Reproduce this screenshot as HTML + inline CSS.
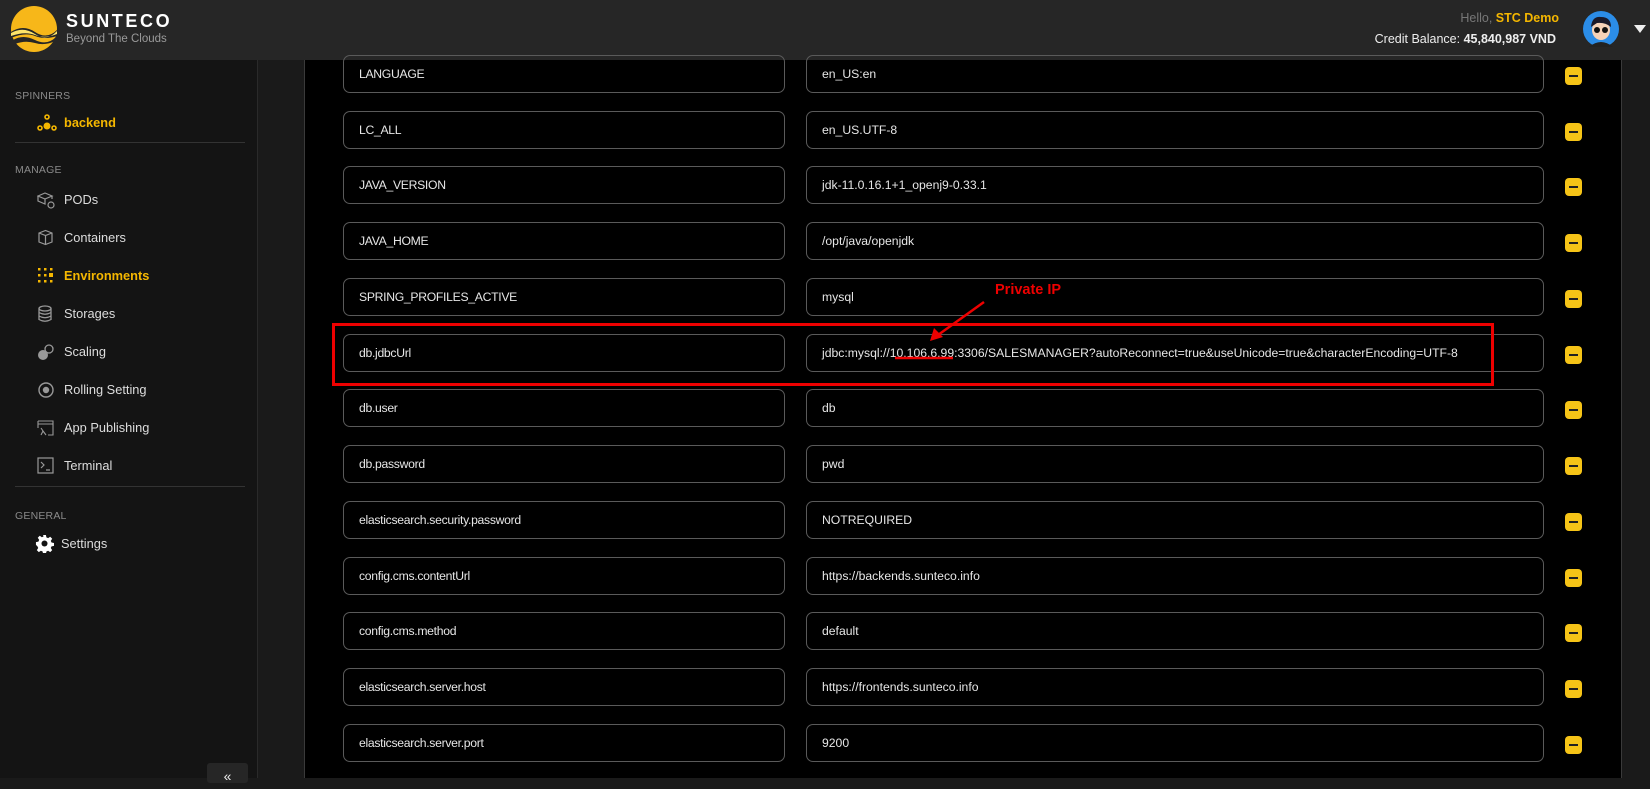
<!DOCTYPE html>
<html><head><meta charset="utf-8"><style>
*{box-sizing:border-box;margin:0;padding:0}
body{width:1650px;height:778px;overflow:hidden;background:#1a1a1a;font-family:"Liberation Sans",sans-serif;position:relative}
.hdr{position:absolute;left:0;top:0;width:1650px;height:60px;background:#262626}
.side{position:absolute;left:0;top:60px;width:258px;height:718px;background:#141414;border-right:1px solid #2a2a2a}
.main{position:absolute;left:304px;top:60px;width:1318px;height:718px;background:#000;border-left:1px solid #3a3a3a;border-right:1px solid #3a3a3a}
.lbl{position:absolute;left:15px;font-size:10.5px;color:#8a8a8a;letter-spacing:.2px}
.it{position:absolute;left:64px;font-size:12.8px;color:#ddd}
.ic{position:absolute;left:37px}
.hr{position:absolute;left:15px;width:230px;height:1px;background:#333}
.box{position:absolute;height:38px;border:1px solid #5a5a5a;border-radius:7px;color:#e6e6e6;font-size:12.2px;line-height:36px;padding-left:15px;white-space:nowrap;overflow:hidden}
.k{left:343px;width:442px;letter-spacing:-0.3px}
.v{left:806px;width:738px}
.m{position:absolute;left:1565px;width:17px;height:18px;background:#f6c417;border-radius:4px}
.m:after{content:"";position:absolute;left:4px;top:8px;width:9px;height:2px;background:#222}
</style></head><body>
<div class="hdr">
 <svg style="position:absolute;left:11px;top:6px" width="46" height="46" viewBox="0 0 46 46">
  <circle cx="23" cy="23" r="23" fill="#f7b719"/>
  <path d="M0 26 Q12 18 24 26 T46 24 L46 30 Q34 34 24 30 T0 32Z" fill="#262626"/>
  <path d="M2 34 Q12 28 24 34 T45 31 L44 35 Q34 40 24 37 T4 38Z" fill="#262626"/>
  <path d="M0 27 Q12 20 24 28 T46 25 L46 28 Q34 33 24 29 T0 30Z" fill="#fde46a"/>
 </svg>
 <div style="position:absolute;left:66px;top:11px;font-size:18px;font-weight:bold;color:#fff;letter-spacing:2.6px">SUNTECO</div>
 <div style="position:absolute;left:66px;top:33px;font-size:11.5px;color:#9a9a9a">Beyond The Clouds</div>
 <div style="position:absolute;right:91px;top:11px;font-size:12.5px;color:#777">Hello, <b style="color:#f5b700">STC Demo</b></div>
 <div style="position:absolute;right:94px;top:32px;font-size:12.5px;color:#eee">Credit Balance: <b>45,840,987 VND</b></div>
 <svg style="position:absolute;left:1583px;top:11px" width="36" height="36" viewBox="0 0 36 36">
  <circle cx="18" cy="18" r="18" fill="#2b8de8"/>
  <path d="M6 36 Q18 26 30 36Z" fill="#222"/>
  <ellipse cx="18" cy="19" rx="9" ry="10" fill="#f5d2b8"/>
  <path d="M8 16 Q9 5 18 6 Q28 6 28 16 Q22 11 14 12Z" fill="#1a1a2a"/>
  <circle cx="14" cy="19" r="3" fill="#111"/><circle cx="22" cy="19" r="3" fill="#111"/>
 </svg>
 <div style="position:absolute;left:1634px;top:25px;width:0;height:0;border-left:6px solid transparent;border-right:6px solid transparent;border-top:8px solid #eee"></div>
</div>
<div class="side">
 <div class="lbl" style="top:30px">SPINNERS</div>
 <svg class="ic" style="top:54px" width="20" height="18" viewBox="0 0 20 18"><g fill="none" stroke="#f5b700" stroke-width="1.6"><circle cx="10" cy="3" r="2"/><circle cx="3" cy="14" r="2"/><circle cx="17" cy="14" r="2"/></g><circle cx="10" cy="12" r="3.5" fill="#f5b700"/></svg>
 <div class="it" style="top:55px;color:#f5b700;font-weight:bold">backend</div>
 <div class="hr" style="top:82px"></div>
 <div class="lbl" style="top:104px">MANAGE</div>
 <svg class="ic" style="top:131px" width="18" height="18" viewBox="0 0 18 18" fill="none" stroke="#999" stroke-width="1.2"><path d="M1 5 L8 2 L15 5 L8 8Z M1 5 V10 L8 13 V8 M15 5 V8"/><circle cx="14" cy="14" r="3"/></svg>
 <div class="it" style="top:132px">PODs</div>
 <svg class="ic" style="top:169px" width="17" height="17" viewBox="0 0 17 17" fill="none" stroke="#999" stroke-width="1.2"><path d="M2 4 L8.5 1.5 L15 4 V13 L8.5 15.5 L2 13Z M2 4 L8.5 6.5 L15 4 M8.5 6.5 V15.5"/></svg>
 <div class="it" style="top:170px">Containers</div>
 <svg class="ic" style="top:207px" width="16" height="16" viewBox="0 0 16 16" fill="#f5b700"><rect x="1" y="1" width="2.5" height="2.5"/><rect x="7" y="1" width="2.5" height="2.5"/><rect x="13" y="1" width="2.5" height="2.5"/><rect x="1" y="7" width="2.5" height="2.5"/><rect x="7" y="7" width="2.5" height="2.5"/><rect x="12" y="6" width="4" height="4"/><rect x="1" y="13" width="2.5" height="2.5"/><rect x="7" y="13" width="2.5" height="2.5"/><rect x="13" y="13" width="2.5" height="2.5"/></svg>
 <div class="it" style="top:208px;color:#f5b700;font-weight:bold">Environments</div>
 <svg class="ic" style="top:245px" width="16" height="18" viewBox="0 0 16 18" fill="none" stroke="#999" stroke-width="1.3"><ellipse cx="8" cy="3.5" rx="6" ry="2.5"/><path d="M2 3.5 V14.5 Q8 18 14 14.5 V3.5 M2 7.5 Q8 11 14 7.5 M2 11 Q8 14.5 14 11"/></svg>
 <div class="it" style="top:246px">Storages</div>
 <svg class="ic" style="top:283px" width="18" height="18" viewBox="0 0 18 18"><circle cx="12" cy="6" r="4" fill="none" stroke="#999" stroke-width="1.3"/><circle cx="6" cy="12" r="5" fill="#999"/></svg>
 <div class="it" style="top:284px">Scaling</div>
 <svg class="ic" style="top:321px" width="18" height="18" viewBox="0 0 18 18" fill="none" stroke="#999" stroke-width="1.4"><circle cx="9" cy="9" r="7"/><circle cx="9" cy="9" r="2.5" fill="#999"/></svg>
 <div class="it" style="top:322px">Rolling Setting</div>
 <svg class="ic" style="top:359px" width="17" height="17" viewBox="0 0 17 17" fill="none" stroke="#999" stroke-width="1.1"><path d="M1 2 H16 V16 H11 M1 2 V9 M1 5 H16 M4 9 L6 12 L4 16 M6 12 L9 16"/></svg>
 <div class="it" style="top:360px">App Publishing</div>
 <svg class="ic" style="top:397px" width="17" height="17" viewBox="0 0 17 17" fill="none" stroke="#999" stroke-width="1.2"><rect x="1" y="1" width="15" height="15"/><path d="M4 5 L7 8 L4 11 M9 13 H13"/></svg>
 <div class="it" style="top:398px">Terminal</div>
 <div class="hr" style="top:426px"></div>
 <div class="lbl" style="top:450px">GENERAL</div>
 <svg style="position:absolute;left:35px;top:474px" width="19" height="19" viewBox="0 0 20 20"><path fill="#fff" d="M8.5 1h3l.5 2.6 1.8.8 2.2-1.5 2.1 2.1-1.5 2.2.8 1.8 2.6.5v3l-2.6.5-.8 1.8 1.5 2.2-2.1 2.1-2.2-1.5-1.8.8-.5 2.6h-3l-.5-2.6-1.8-.8-2.2 1.5-2.1-2.1 1.5-2.2-.8-1.8L1 11.5v-3l2.6-.5.8-1.8L2.9 4 5 1.9l2.2 1.5 1.8-.8z"/><circle cx="10" cy="10" r="3.2" fill="#141414"/></svg>
 <div class="it" style="top:476px;left:61px">Settings</div>
 <div style="position:absolute;left:207px;top:703px;width:41px;height:20px;background:#262626;border-radius:3px;color:#eee;font-size:14px;text-align:center;line-height:26px">«</div>
</div>
<div class="main"></div>
<div class="box k" style="top:55px">LANGUAGE</div><div class="box v" style="top:55px">en_US:en</div><div class="m" style="top:67px"></div>
<div class="box k" style="top:111px">LC_ALL</div><div class="box v" style="top:111px">en_US.UTF-8</div><div class="m" style="top:123px"></div>
<div class="box k" style="top:166px">JAVA_VERSION</div><div class="box v" style="top:166px">jdk-11.0.16.1+1_openj9-0.33.1</div><div class="m" style="top:178px"></div>
<div class="box k" style="top:222px">JAVA_HOME</div><div class="box v" style="top:222px">/opt/java/openjdk</div><div class="m" style="top:234px"></div>
<div class="box k" style="top:278px">SPRING_PROFILES_ACTIVE</div><div class="box v" style="top:278px">mysql</div><div class="m" style="top:290px"></div>
<div class="box k" style="top:334px">db.jdbcUrl</div><div class="box v" style="top:334px">jdbc:mysql://10.106.6.99:3306/SALESMANAGER?autoReconnect=true&amp;useUnicode=true&amp;characterEncoding=UTF-8</div><div class="m" style="top:346px"></div>
<div class="box k" style="top:389px">db.user</div><div class="box v" style="top:389px">db</div><div class="m" style="top:401px"></div>
<div class="box k" style="top:445px">db.password</div><div class="box v" style="top:445px">pwd</div><div class="m" style="top:457px"></div>
<div class="box k" style="top:501px">elasticsearch.security.password</div><div class="box v" style="top:501px">NOTREQUIRED</div><div class="m" style="top:513px"></div>
<div class="box k" style="top:557px">config.cms.contentUrl</div><div class="box v" style="top:557px">https://backends.sunteco.info</div><div class="m" style="top:569px"></div>
<div class="box k" style="top:612px">config.cms.method</div><div class="box v" style="top:612px">default</div><div class="m" style="top:624px"></div>
<div class="box k" style="top:668px">elasticsearch.server.host</div><div class="box v" style="top:668px">https://frontends.sunteco.info</div><div class="m" style="top:680px"></div>
<div class="box k" style="top:724px">elasticsearch.server.port</div><div class="box v" style="top:724px">9200</div><div class="m" style="top:736px"></div>
<div style="position:absolute;left:332px;top:323px;width:1162px;height:63px;border:3px solid #e00"></div>
<div style="position:absolute;left:995px;top:282px;font-size:14.5px;font-weight:bold;color:#e00">Private IP</div>
<svg style="position:absolute;left:0;top:0" width="1650" height="778"><line x1="984" y1="302" x2="938" y2="335" stroke="#e00" stroke-width="2.5"/><path d="M930 341 L934 328 L943 337Z" fill="#e00"/><line x1="895" y1="358" x2="953" y2="358" stroke="#e00" stroke-width="2.5"/></svg>
</body></html>
